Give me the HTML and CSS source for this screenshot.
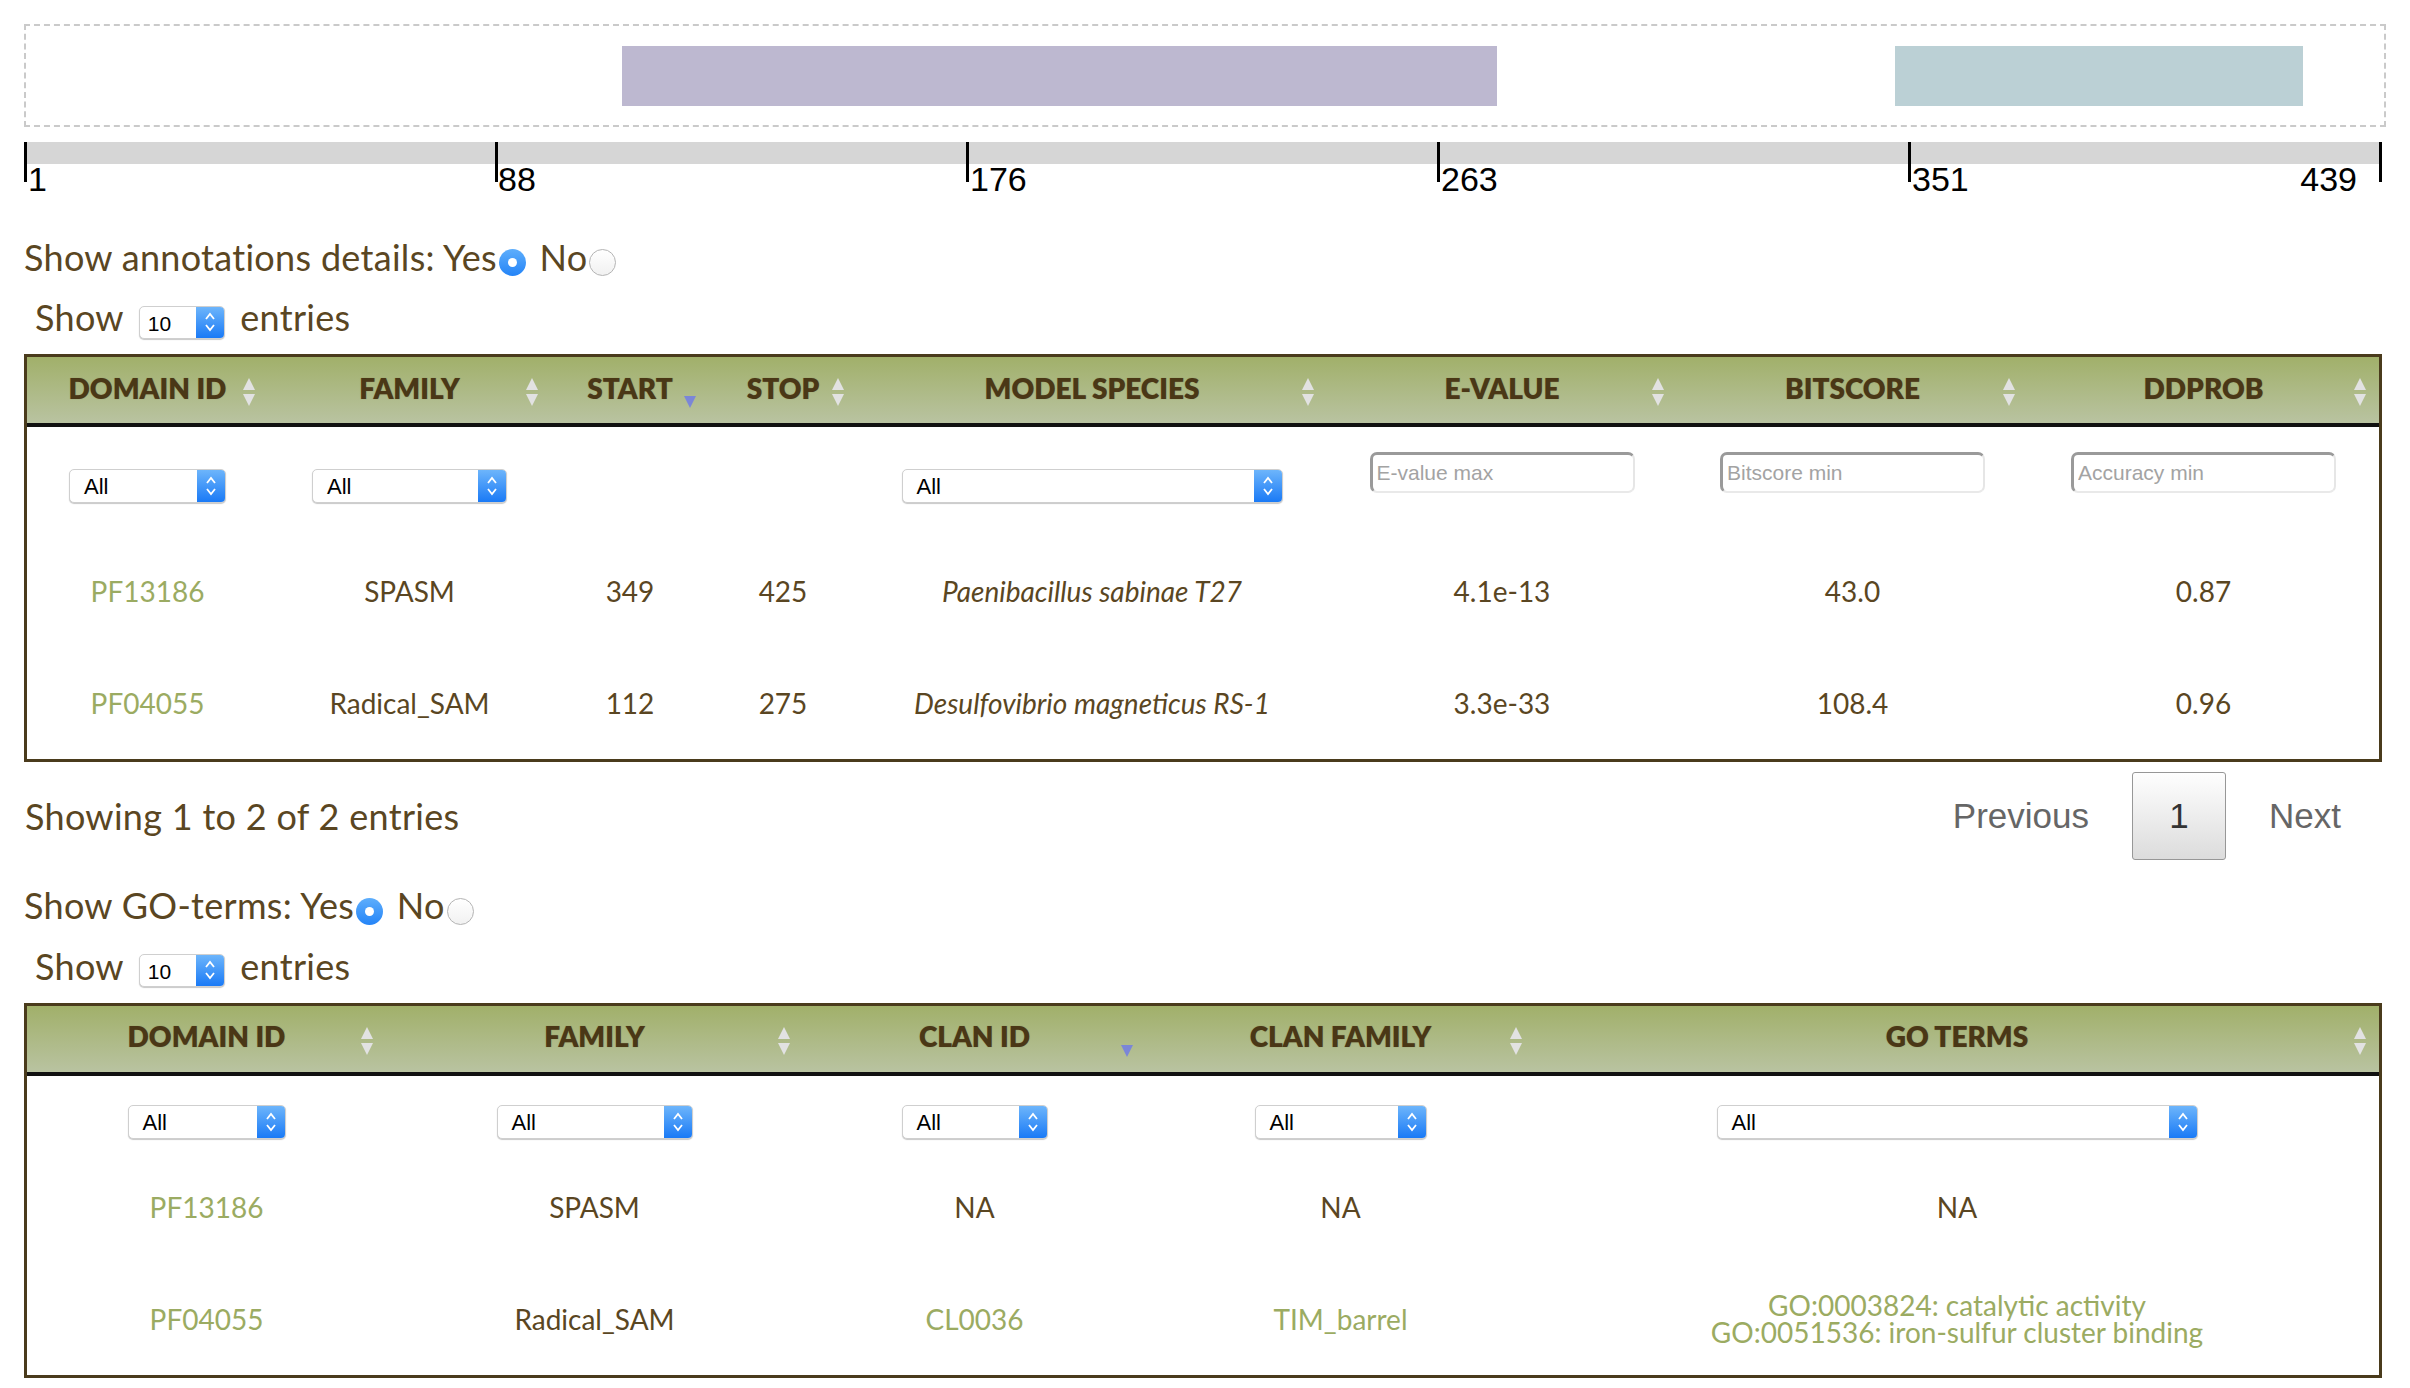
FILE: index.html
```html
<!DOCTYPE html>
<html>
<head>
<meta charset="utf-8">
<title>Domain annotations</title>
<link rel="stylesheet" href="styles.css">
</head>
<body>
<div class="page">
  <div class="track">
    <div class="domain dom-purple" style="left:596px;width:875px"></div>
    <div class="domain dom-teal" style="left:1869px;width:408px"></div>
  </div>

  <div class="ruler">
    <div class="ruler-bar"></div>
    <span class="tick" style="left:0px"></span>
    <span class="tick" style="left:471px"></span>
    <span class="tick" style="left:942px"></span>
    <span class="tick" style="left:1413px"></span>
    <span class="tick" style="left:1884px"></span>
    <span class="tick" style="left:2355px"></span>
    <span class="tick-label" style="left:4px">1</span>
    <span class="tick-label" style="left:474px">88</span>
    <span class="tick-label" style="left:946px">176</span>
    <span class="tick-label" style="left:1417px">263</span>
    <span class="tick-label" style="left:1888px">351</span>
    <span class="tick-label tick-label-end">439</span>
  </div>

  <div class="toggle">Show annotations details: Yes<span class="radio radio-on"></span> No<span class="radio"></span></div>
  <div class="length">Show <span class="select select-len"><span class="sel-text">10</span><span class="sel-arrow"><svg viewBox="0 0 12 22" width="12" height="22"><polyline points="2,8 6,3 10,8"/><polyline points="2,14 6,19 10,14"/></svg></span></span> entries</div>

  <table class="dt">
    <colgroup>
      <col style="width:241px"><col style="width:283px"><col style="width:158px"><col style="width:148px">
      <col style="width:470px"><col style="width:350px"><col style="width:351px"><col style="width:351px">
    </colgroup>
    <thead>
      <tr>
        <th>DOMAIN ID<span class="sort"></span></th>
        <th>FAMILY<span class="sort"></span></th>
        <th>START<span class="sort sort-desc"></span></th>
        <th>STOP<span class="sort"></span></th>
        <th>MODEL SPECIES<span class="sort"></span></th>
        <th>E-VALUE<span class="sort"></span></th>
        <th>BITSCORE<span class="sort"></span></th>
        <th>DDPROB<span class="sort"></span></th>
      </tr>
    </thead>
    <tbody>
      <tr class="filter-row filter-row-tall">
        <td><span class="select select-low" style="width:157px"><span class="sel-text">All</span><span class="sel-arrow"><svg viewBox="0 0 12 22" width="12" height="22"><polyline points="2,8 6,3 10,8"/><polyline points="2,14 6,19 10,14"/></svg></span></span></td>
        <td><span class="select select-low" style="width:195px"><span class="sel-text">All</span><span class="sel-arrow"><svg viewBox="0 0 12 22" width="12" height="22"><polyline points="2,8 6,3 10,8"/><polyline points="2,14 6,19 10,14"/></svg></span></span></td>
        <td></td>
        <td></td>
        <td><span class="select select-low" style="width:381px"><span class="sel-text">All</span><span class="sel-arrow"><svg viewBox="0 0 12 22" width="12" height="22"><polyline points="2,8 6,3 10,8"/><polyline points="2,14 6,19 10,14"/></svg></span></span></td>
        <td><input class="filter-input" type="text" placeholder="E-value max"></td>
        <td><input class="filter-input" type="text" placeholder="Bitscore min"></td>
        <td><input class="filter-input" type="text" placeholder="Accuracy min"></td>
      </tr>
      <tr class="data-row">
        <td><a class="lnk">PF13186</a></td>
        <td>SPASM</td>
        <td>349</td>
        <td>425</td>
        <td class="species">Paenibacillus sabinae T27</td>
        <td>4.1e-13</td>
        <td>43.0</td>
        <td>0.87</td>
      </tr>
      <tr class="data-row">
        <td><a class="lnk">PF04055</a></td>
        <td>Radical_SAM</td>
        <td>112</td>
        <td>275</td>
        <td class="species">Desulfovibrio magneticus RS-1</td>
        <td>3.3e-33</td>
        <td>108.4</td>
        <td>0.96</td>
      </tr>
    </tbody>
  </table>

  <div class="info-row">
    <div class="info">Showing 1 to 2 of 2 entries</div>
    <div class="paginate">
      <span class="pg">Previous</span>
      <span class="pg pg-current">1</span>
      <span class="pg">Next</span>
    </div>
  </div>

  <div class="toggle toggle-go">Show GO-terms: Yes<span class="radio radio-on"></span> No<span class="radio"></span></div>
  <div class="length">Show <span class="select select-len"><span class="sel-text">10</span><span class="sel-arrow"><svg viewBox="0 0 12 22" width="12" height="22"><polyline points="2,8 6,3 10,8"/><polyline points="2,14 6,19 10,14"/></svg></span></span> entries</div>

  <table class="dt">
    <colgroup>
      <col style="width:359px"><col style="width:417px"><col style="width:343px"><col style="width:389px"><col style="width:844px">
    </colgroup>
    <thead>
      <tr>
        <th>DOMAIN ID<span class="sort"></span></th>
        <th>FAMILY<span class="sort"></span></th>
        <th>CLAN ID<span class="sort sort-desc"></span></th>
        <th>CLAN FAMILY<span class="sort"></span></th>
        <th>GO TERMS<span class="sort"></span></th>
      </tr>
    </thead>
    <tbody>
      <tr class="filter-row">
        <td><span class="select" style="width:158px"><span class="sel-text">All</span><span class="sel-arrow"><svg viewBox="0 0 12 22" width="12" height="22"><polyline points="2,8 6,3 10,8"/><polyline points="2,14 6,19 10,14"/></svg></span></span></td>
        <td><span class="select" style="width:196px"><span class="sel-text">All</span><span class="sel-arrow"><svg viewBox="0 0 12 22" width="12" height="22"><polyline points="2,8 6,3 10,8"/><polyline points="2,14 6,19 10,14"/></svg></span></span></td>
        <td><span class="select" style="width:146px"><span class="sel-text">All</span><span class="sel-arrow"><svg viewBox="0 0 12 22" width="12" height="22"><polyline points="2,8 6,3 10,8"/><polyline points="2,14 6,19 10,14"/></svg></span></span></td>
        <td><span class="select" style="width:172px"><span class="sel-text">All</span><span class="sel-arrow"><svg viewBox="0 0 12 22" width="12" height="22"><polyline points="2,8 6,3 10,8"/><polyline points="2,14 6,19 10,14"/></svg></span></span></td>
        <td><span class="select" style="width:481px"><span class="sel-text">All</span><span class="sel-arrow"><svg viewBox="0 0 12 22" width="12" height="22"><polyline points="2,8 6,3 10,8"/><polyline points="2,14 6,19 10,14"/></svg></span></span></td>
      </tr>
      <tr class="data-row">
        <td><a class="lnk">PF13186</a></td>
        <td>SPASM</td>
        <td>NA</td>
        <td>NA</td>
        <td>NA</td>
      </tr>
      <tr class="data-row">
        <td><a class="lnk">PF04055</a></td>
        <td>Radical_SAM</td>
        <td><a class="lnk">CL0036</a></td>
        <td><a class="lnk">TIM_barrel</a></td>
        <td class="go-cell"><a class="lnk go-line">GO:0003824: catalytic activity</a><a class="lnk go-line">GO:0051536: iron-sulfur cluster binding</a></td>
      </tr>
    </tbody>
  </table>
</div>
</body>
</html>
```

FILE: styles.css
```css
html, body {
  margin: 0;
  padding: 0;
  background: #ffffff;
}

body {
  font-family: Lato, "Noto Sans", sans-serif;
  color: #5a4622;
}

.page {
  padding: 0 28px 0 24px;
}

/* domain track */
.track {
  position: relative;
  box-sizing: border-box;
  margin-top: 24px;
  margin-right: -4px;
  height: 103px;
  border: 2px dashed #cacaca;
}

.domain {
  position: absolute;
  top: 20px;
  height: 60px;
}

.dom-purple { background: #bdb8d0; }
.dom-teal { background: #bbd0d5; }

/* ruler */
.ruler {
  position: relative;
  margin-top: 15px;
  height: 56px;
}

.ruler-bar {
  width: 2355px;
  height: 22px;
  background: #d6d6d6;
}

.tick {
  position: absolute;
  top: 0;
  width: 3px;
  height: 40px;
  background: #000;
}

.tick-label {
  position: absolute;
  top: 20px;
  font-family: "Liberation Sans", Arial, sans-serif;
  font-size: 34px;
  line-height: 34px;
  color: #000;
}

.tick-label-end {
  right: 25px;
}

/* toggles */
.toggle {
  margin-top: 38px;
  font-size: 36px;
  line-height: 1.2;
  letter-spacing: 0.3px;
}

.toggle-go {
  margin-top: 24px;
}

.radio {
  display: inline-block;
  box-sizing: border-box;
  width: 27px;
  height: 27px;
  margin: 0 4px 0 2px;
  border-radius: 50%;
  vertical-align: middle;
  border: 1px solid #b4b4b4;
  background: linear-gradient(#ffffff, #f1f1f1);
  position: relative;
  top: 1px;
}

.radio-on {
  border: none;
  background: linear-gradient(#5eaefc, #2484f7);
}

.radio-on::after {
  content: "";
  position: absolute;
  left: 9px;
  top: 9px;
  width: 9px;
  height: 9px;
  border-radius: 50%;
  background: #fff;
}

.length {
  margin-top: 17px;
  padding-left: 11px;
  font-size: 36px;
  line-height: 1.2;
  letter-spacing: 0.3px;
}

/* fake mac select */
.select {
  display: inline-flex;
  box-sizing: border-box;
  height: 34px;
  vertical-align: middle;
  border: 1px solid #cfcfcf;
  border-radius: 5px;
  background: #fff;
  box-shadow: 0 1px 1px rgba(0, 0, 0, 0.22);
  font-family: "Liberation Sans", Arial, sans-serif;
  font-size: 22px;
  letter-spacing: 0;
  color: #000;
  overflow: hidden;
  text-align: left;
}

.select-len {
  width: 86px;
  height: 33px;
  margin: 0 6px;
}

.sel-text {
  flex: 1;
  padding-left: 14px;
  line-height: 34px;
}

.select-len .sel-text {
  padding-left: 8px;
  line-height: 33px;
  font-size: 21px;
}

.sel-arrow {
  width: 28px;
  display: flex;
  align-items: center;
  justify-content: center;
  background: linear-gradient(#6db5fb, #1a7af6);
}

.sel-arrow svg polyline {
  fill: none;
  stroke: #fff;
  stroke-width: 1.8;
}

/* data tables */
.dt {
  width: 2358px;
  table-layout: fixed;
  border-collapse: separate;
  border-spacing: 0;
  border: 3px solid #4a3b1c;
  margin-top: 15px;
}

.dt th {
  position: relative;
  height: 70px;
  padding: 0 10px 5px;
  box-sizing: border-box;
  background: linear-gradient(#a1b06a, #b9c3a1);
  border-bottom: 4px solid #111;
  font-size: 28px;
  font-weight: 800;
  color: #4a3716;
  text-align: center;
  vertical-align: middle;
  white-space: nowrap;
  text-shadow: 0 0 1px rgba(60, 40, 10, 0.35);
}

.sort {
  position: absolute;
  right: 13px;
  top: 21px;
  width: 12px;
  height: 28px;
}

.sort::before,
.sort::after {
  content: "";
  position: absolute;
  left: 0;
  border-left: 6px solid transparent;
  border-right: 6px solid transparent;
}

.sort::before {
  top: 0;
  border-bottom: 12px solid #e2e2e2;
}

.sort::after {
  bottom: 0;
  border-top: 12px solid #e2e2e2;
}

.sort-desc::before {
  display: none;
}

.sort-desc::after {
  border-top-color: #7b86d7;
  bottom: -2px;
}

.dt td {
  padding: 0 10px;
  text-align: center;
  font-size: 28px;
  color: #5a4622;
}

.filter-row td {
  height: 75px;
  box-sizing: border-box;
  padding-top: 25px;
  vertical-align: top;
}

.filter-row-tall td {
  height: 108px;
}

.select-low {
  margin-top: 17px;
}

.filter-input {
  box-sizing: border-box;
  width: 265px;
  height: 41px;
  margin: 0;
  padding: 0 4px;
  border-style: solid;
  border-width: 3px 2px 2px 3px;
  border-color: #9a9a9a #e6e6e6 #e9e9e9 #9a9a9a;
  border-radius: 7px;
  background: #fff;
  font-family: "Liberation Sans", Arial, sans-serif;
  font-size: 21px;
  color: #333;
  outline: none;
}

.filter-input::placeholder {
  color: #a3a3a3;
}

.data-row td {
  height: 112px;
  vertical-align: middle;
}

.species {
  font-style: italic;
}

.lnk {
  color: #9bab62;
  text-decoration: none;
}

.go-cell {
  padding-top: 4px;
}

.go-line {
  display: block;
  height: 27px;
  line-height: 27px;
  overflow: visible;
}

/* info + pagination */
.info-row {
  display: flex;
  justify-content: space-between;
  align-items: center;
  margin-top: 10px;
  height: 88px;
}

.info {
  font-size: 36px;
  letter-spacing: 0.3px;
  padding-left: 1px;
}

.paginate {
  display: flex;
  align-items: center;
  gap: 6px;
  font-family: "Liberation Sans", Arial, sans-serif;
  font-size: 35px;
  color: #666;
  margin-right: 4px;
}

.pg {
  box-sizing: border-box;
  height: 88px;
  line-height: 86px;
  padding: 0 36px;
  border: 1px solid transparent;
  border-radius: 3px;
}

.pg-current {
  width: 94px;
  padding: 0;
  text-align: center;
  color: #333;
  border-color: #979797;
  background: linear-gradient(#fefefe, #dcdcdc);
}
```
